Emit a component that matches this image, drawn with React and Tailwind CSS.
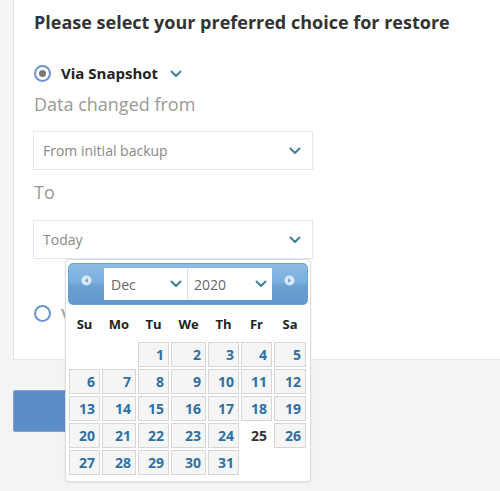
import React from "react";

const Chevron = ({ className = "" }) => (
  <svg width="12" height="8" viewBox="0 0 12 8" className={className}>
    <path d="M1.5 1.5 L6 6 L10.5 1.5" fill="none" stroke="#3f8196" strokeWidth="2" strokeLinecap="round" strokeLinejoin="round" />
  </svg>
);

const CircleArrow = ({ dir }) => (
  <svg width="11" height="11" viewBox="0 0 11 11">
    <circle cx="5.5" cy="5.5" r="5" fill="#dce9f5" />
    {dir === "left" ? (
      <path d="M6.8 3 L3.8 5.5 L6.8 8 Z" fill="#6fa0cf" />
    ) : (
      <path d="M4.2 3 L7.2 5.5 L4.2 8 Z" fill="#6fa0cf" />
    )}
  </svg>
);

const weeks = [
  [null, null, 1, 2, 3, 4, 5],
  [6, 7, 8, 9, 10, 11, 12],
  [13, 14, 15, 16, 17, 18, 19],
  [20, 21, 22, 23, 24, 25, 26],
  [27, 28, 29, 30, 31, null, null],
];

const days = ["Su", "Mo", "Tu", "We", "Th", "Fr", "Sa"];

export default function App() {
  return (
    <div
      className="relative w-[500px] h-[491px] overflow-hidden bg-[#f4f4f4] pl-[13px]"
      style={{ fontFamily: '"Open Sans", "Noto Sans", sans-serif' }}
    >
      {/* Card */}
      <div className="bg-white border-l border-b border-[#e4e4e4] pl-[20px] pb-[34px] flex flex-col">
        <div className="mt-[10px] h-[24px] flex items-center text-[18px] font-bold text-[#333] whitespace-nowrap">
          Please select your preferred choice for restore
        </div>
        <div className="mt-[27px] h-[24px] flex items-center">
          <span className="w-[17px] h-[17px] rounded-full border-2 border-[#6b95cc] flex items-center justify-center">
            <span className="w-[7px] h-[7px] rounded-full bg-[#777]" />
          </span>
          <span className="ml-[10px] text-[15px] font-bold text-[#222]">Via Snapshot</span>
          <Chevron className="ml-[12px] mt-[1px]" />
        </div>
        <div className="mt-[7px] h-[24px] flex items-center text-[18px] text-[#999]">Data changed from</div>
        <div className="mt-[15px] h-[39px] w-[280px] -ml-px border border-[#e6e6e6] flex items-center justify-between pl-[9px] pr-[11px]">
          <span className="text-[14px] text-[#888]">From initial backup</span>
          <Chevron />
        </div>
        <div className="mt-[10px] h-[24px] flex items-center text-[18px] text-[#999]">To</div>
        <div className="mt-[16px] h-[39px] w-[280px] -ml-px border border-[#e6e6e6] flex items-center justify-between pl-[9px] pr-[11px]">
          <span className="text-[14px] text-[#888]">Today</span>
          <Chevron />
        </div>
        <div className="mt-[42px] h-[24px] flex items-center">
          <span className="w-[17px] h-[17px] rounded-full border-2 border-[#6b95cc] bg-white" />
          <span className="ml-[10px] text-[15px] font-bold text-[#aaa]">V</span>
        </div>
      </div>

      {/* Button */}
      <div className="mt-[30px] h-[42px] w-[160px] rounded-[2px] bg-[#5d8dc8] border border-[#7ea3d3]" />

      {/* Datepicker popup */}
      <div className="absolute left-[65px] top-[259px] w-[246px] h-[223px] bg-white border border-[#dedede] rounded-[4px] shadow-[0_1px_3px_rgba(0,0,0,0.08)] px-[2px] pt-[3px]">
        <div
          className="h-[42px] rounded-[5px] border border-[#6a9fd2] flex items-center"
          style={{ background: "linear-gradient(to bottom, #8dbce6 0%, #7aaedd 45%, #6aa1d3 55%, #6199cd 100%)" }}
        >
          <div className="w-[35px] flex justify-center -mt-[8px]">
            <CircleArrow dir="left" />
          </div>
          <div className="h-[32px] w-[84px] bg-white border-r border-[#ddd] flex items-center justify-between pl-[7px] pr-[5px]">
            <span className="text-[14px] text-[#666]">Dec</span>
            <Chevron />
          </div>
          <div className="h-[32px] w-[84px] bg-white flex items-center justify-between pl-[6px] pr-[5px]">
            <span className="text-[14px] text-[#666]">2020</span>
            <Chevron />
          </div>
          <div className="flex-1 flex justify-center -mt-[8px]">
            <CircleArrow dir="right" />
          </div>
        </div>
        <div className="ml-[1px] mt-[4px] grid grid-cols-[31px_34px_31px_35px_31px_31px_32px] gap-x-[2px] gap-y-[2px]">
          {days.map((d) => (
            <div key={d} className="h-[31px] flex items-center justify-center text-[13px] font-bold text-[#222]">
              {d}
            </div>
          ))}
          {weeks.flat().map((n, i) =>
            n === null ? (
              <div key={i} className="h-[25px]" />
            ) : n === 25 ? (
              <div key={i} className="h-[25px] flex items-center justify-end pr-[5px] text-[14px] font-bold text-[#333]">
                {n}
              </div>
            ) : (
              <div
                key={i}
                className="h-[25px] flex items-center justify-end pr-[4px] text-[14px] font-bold text-[#2f6fa3] bg-[#f5f5f5] border border-[#d6d6d6]"
              >
                {n}
              </div>
            )
          )}
        </div>
      </div>
    </div>
  );
}
